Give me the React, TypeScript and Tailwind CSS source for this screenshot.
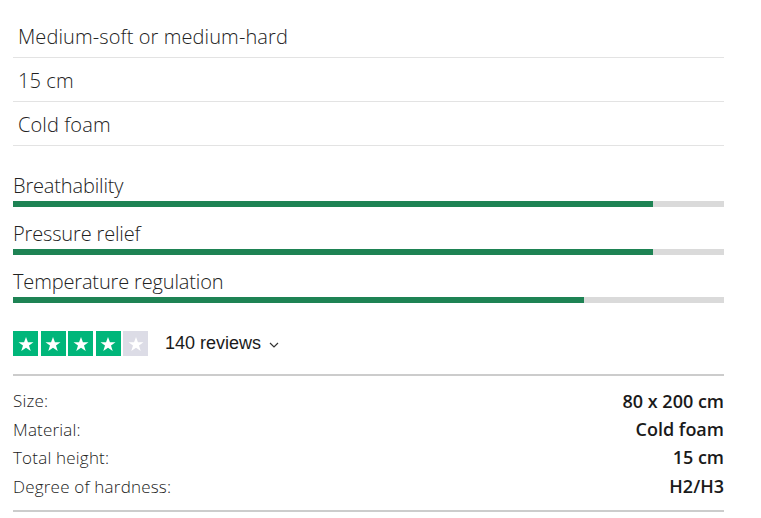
const rows = ["Medium-soft or medium-hard", "15 cm", "Cold foam"];

const ratings = [
  { label: "Breathability", value: 90 },
  { label: "Pressure relief", value: 90 },
  { label: "Temperature regulation", value: 80.3 },
];

const specs = [
  ["Size:", "80 x 200 cm"],
  ["Material:", "Cold foam"],
  ["Total height:", "15 cm"],
  ["Degree of hardness:", "H2/H3"],
];

function Star({ filled }: { filled: boolean }) {
  return (
    <div className={`flex size-[25px] items-center justify-center ${filled ? "bg-[#00b67a]" : "bg-[#dcdce6]"}`}>
      <svg viewBox="0 0 24 24" className="size-[18px]" fill="#fff">
        <path d="M12 2.5l2.6 7.1h7.4l-6 4.5 2.3 7.3L12 17l-6.3 4.4 2.3-7.3-6-4.5h7.4z" />
      </svg>
    </div>
  );
}

export default function App() {
  return (
    <div className="w-[761px] h-[518px] bg-white text-[#222] font-['Open_Sans',sans-serif] font-light">
      <div className="w-[711px] ml-[13px] pt-[14px]">
        <div>
          {rows.map((r) => (
            <div key={r} className="h-[44px] flex items-center pl-[5px] pt-[3px] border-b border-[#e3e3e3] text-[20px] tracking-[0.1px]">
              {r}
            </div>
          ))}
        </div>

        <div className="mt-[27px] flex flex-col gap-[14px]">
          {ratings.map((r) => (
            <div key={r.label}>
              <div className="text-[20px] leading-[26px] tracking-[-0.15px]">{r.label}</div>
              <div className="mt-[2px] h-[6px] bg-[#dadada]">
                <div className="h-full bg-[#1e8354]" style={{ width: `${r.value}%` }} />
              </div>
            </div>
          ))}
        </div>

        <div className="mt-[27px] flex items-center">
          <div className="flex gap-[2.5px]">
            {[0, 1, 2, 3, 4].map((i) => (
              <Star key={i} filled={i < 4} />
            ))}
          </div>
          <span className="ml-[17px] font-['Liberation_Sans',Arial,sans-serif] font-normal text-[18px] text-[#1a1a1a]">140 reviews</span>
          <svg viewBox="0 0 10 6" className="ml-[8px] mt-[3px] w-[10px] h-[6px]" fill="none" stroke="#333" strokeWidth="1.2">
            <path d="M1 1l4 4 4-4" />
          </svg>
        </div>

        <div className="mt-[17px] border-t-2 border-[#cccccc] border-b-2 pt-[11px] pb-[9px]">
          {specs.map(([k, v]) => (
            <div key={k} className="flex justify-between h-[28.4px] items-center text-[17px]">
              <span className="tracking-[0.2px]">{k}</span>
              <span className="font-semibold text-[18px] text-[#1a1a1a]">{v}</span>
            </div>
          ))}
        </div>
      </div>
    </div>
  );
}
